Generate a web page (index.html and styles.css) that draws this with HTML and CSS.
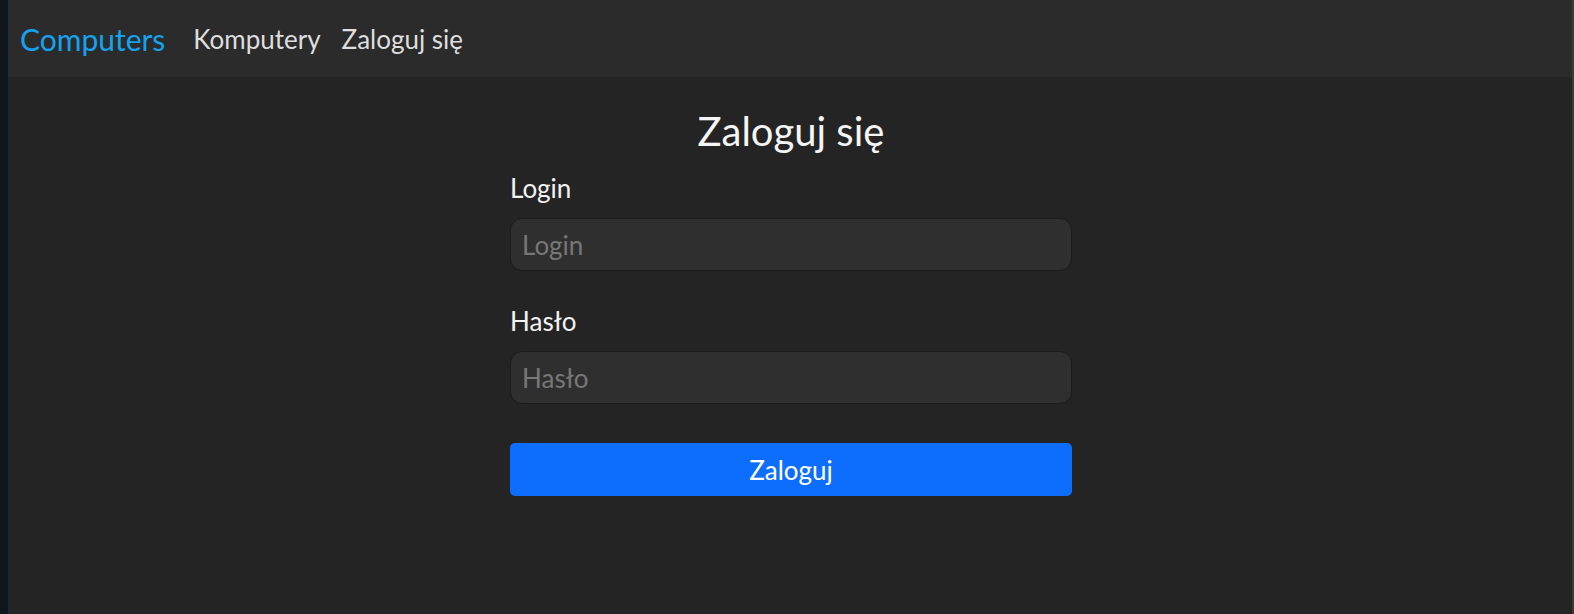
FILE: index.html
```html
<!DOCTYPE html>
<html lang="pl">
<head>
<meta charset="utf-8">
<title>Zaloguj się</title>
<link rel="stylesheet" href="styles.css">
</head>
<body>
<nav class="navbar">
  <a class="brand" href="#">Computers</a>
  <a class="nav-link" href="#">Komputery</a>
  <a class="nav-link" href="#">Zaloguj się</a>
</nav>
<main class="main">
  <form class="login-form">
    <h3 class="title">Zaloguj się</h3>
    <div class="field">
      <label class="label" for="login">Login</label>
      <input class="input" id="login" type="text" placeholder="Login">
    </div>
    <div class="field">
      <label class="label" for="haslo">Hasło</label>
      <input class="input" id="haslo" type="password" placeholder="Hasło">
    </div>
    <button class="btn" type="button">Zaloguj</button>
  </form>
</main>
</body>
</html>
```

FILE: styles.css
```css
html {
  background: #0c1620;
  box-shadow: inset 2px 0 0 #121417;
  height: 100%;
}
body {
  margin: 0 2px 0 8px;
  min-height: 100vh;
  background: #242424;
  font-family: "Lato", "Open Sans", sans-serif;
  color: #f2f2f2;
  box-shadow: 2px 0 0 #3a3a3a;
}
.navbar {
  height: 77px;
  box-sizing: border-box;
  background: #2b2b2b;
  display: flex;
  align-items: center;
  padding-left: 12px;
}
.brand {
  font-size: 30px;
  color: #13a3ef;
  text-decoration: none;
  margin-right: 28px;
}
.nav-link {
  font-size: 26px;
  color: #dedede;
  text-decoration: none;
  margin-right: 21px;
}
.main {
  display: flex;
  justify-content: center;
  padding-left: 2px;
}
.login-form {
  width: 562px;
  display: flex;
  flex-direction: column;
}
.title {
  margin: 30px 0 18px;
  font-size: 40px;
  font-weight: 400;
  line-height: 48px;
  text-align: center;
  color: #f5f5f5;
}
.field {
  display: flex;
  flex-direction: column;
  margin-bottom: 35px;
}
.label {
  font-size: 26px;
  line-height: 31px;
  margin-bottom: 14px;
  color: #f2f2f2;
}
.input {
  height: 53px;
  box-sizing: border-box;
  border: 1px solid #1b1b1b;
  border-radius: 12px;
  background: #2f2f2f;
  padding: 0 11px;
  font-family: inherit;
  font-size: 26px;
  color: #eee;
  outline: none;
}
.input::placeholder {
  color: #777;
}
.btn {
  margin-top: 4px;
  height: 53px;
  border: 0;
  border-radius: 5px;
  background: #0d6efd;
  color: #fff;
  font-family: inherit;
  font-size: 26px;
  cursor: pointer;
}
```
